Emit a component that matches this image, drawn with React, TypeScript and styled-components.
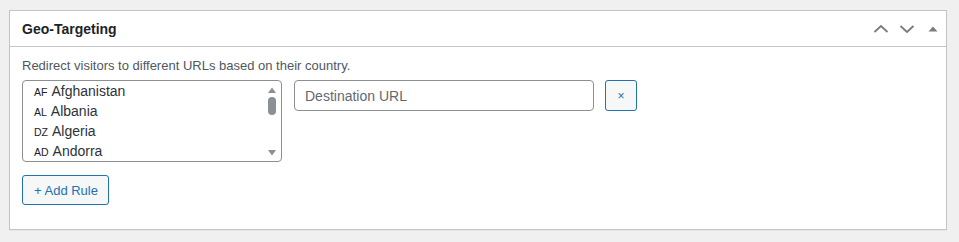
import React from 'react'
import styled, { createGlobalStyle } from 'styled-components'

const countries = [
    { code: 'AF', name: 'Afghanistan' },
    { code: 'AL', name: 'Albania' },
    { code: 'DZ', name: 'Algeria' },
    { code: 'AD', name: 'Andorra' },
]

const GlobalStyle = createGlobalStyle`
    body {
        margin: 0;
        background: #f0f0f1;
        font-family: "Liberation Sans", "Segoe UI", sans-serif;
        color: #1d2327;
    }
`

const App = () => {
    return (
        <>
            <GlobalStyle />
            <Page>
                <Postbox>
                    <Header>
                        <Title>Geo-Targeting</Title>
                        <HeaderActions>
                            <IconButton aria-label="Move up">
                                <svg width="16" height="16" viewBox="0 0 16 16">
                                    <path d="M1.5 11 L8 5 L14.5 11" fill="none" stroke="#787c82" strokeWidth="1.8" />
                                </svg>
                            </IconButton>
                            <IconButton aria-label="Move down">
                                <svg width="16" height="16" viewBox="0 0 16 16">
                                    <path d="M1.5 5 L8 11 L14.5 5" fill="none" stroke="#787c82" strokeWidth="1.8" />
                                </svg>
                            </IconButton>
                            <IconButton aria-label="Toggle panel">
                                <svg width="10" height="10" viewBox="0 0 10 10">
                                    <path d="M0.5 7.5 L5 2.5 L9.5 7.5 Z" fill="#787c82" />
                                </svg>
                            </IconButton>
                        </HeaderActions>
                    </Header>

                    <Inside>
                        <Description>Redirect visitors to different URLs based on their country.</Description>

                        <Rule>
                            <ListBox>
                                <Options>
                                    {countries.map((country) => (
                                        <Option key={country.code}>
                                            <Code>{country.code}</Code>
                                            {country.name}
                                        </Option>
                                    ))}
                                </Options>
                                <Scrollbar>
                                    <svg width="10" height="8" viewBox="0 0 10 8">
                                        <path d="M1 7 L5 1.5 L9 7 Z" fill="#8c8f94" />
                                    </svg>
                                    <Thumb />
                                    <Track />
                                    <svg width="10" height="8" viewBox="0 0 10 8">
                                        <path d="M1 1 L5 6.5 L9 1 Z" fill="#8c8f94" />
                                    </svg>
                                </Scrollbar>
                            </ListBox>

                            <UrlInput type="text" placeholder="Destination URL" />

                            <RemoveButton aria-label="Remove rule">×</RemoveButton>
                        </Rule>

                        <AddButton>+ Add Rule</AddButton>
                    </Inside>
                </Postbox>
            </Page>
        </>
    )
}

const Page = styled.div`
    padding: 10px 12px 11px 9px;
`

const Postbox = styled.div`
    background: #fff;
    border: 1px solid #c3c4c7;
    box-shadow: 0 1px 1px rgba(0,0,0,0.04);
`

const Header = styled.div`
    display: flex;
    align-items: center;
    justify-content: space-between;
    height: 36px;
    box-sizing: border-box;
    border-bottom: 1px solid #c3c4c7;
    padding: 1px 0 0 12px;
`

const Title = styled.h2`
    margin: 0;
    font-size: 14px;
    font-weight: 600;
    color: #1d2327;
`

const HeaderActions = styled.div`
    display: flex;
    align-items: center;
`

const IconButton = styled.button`
    width: 26px;
    height: 26px;
    padding: 0;
    border: 0;
    background: none;
    display: flex;
    align-items: center;
    justify-content: center;
`

const Inside = styled.div`
    padding: 9px 12px 24px 12px;
`

const Description = styled.p`
    margin: 0 0 4px;
    font-size: 13px;
    line-height: 20px;
    color: #50575e;
`

const Rule = styled.div`
    display: flex;
    align-items: flex-start;
    gap: 12px;
`

const ListBox = styled.div`
    display: flex;
    width: 260px;
    height: 82px;
    box-sizing: border-box;
    border: 1px solid #8c8f94;
    border-radius: 4px;
    overflow: hidden;
`

const Options = styled.ul`
    flex: 1;
    list-style: none;
    margin: 0;
    padding: 0 0 0 11px;
`

const Option = styled.li`
    height: 20px;
    line-height: 20px;
    font-size: 14px;
    color: #2c3338;
`

const Code = styled.span`
    font-size: 10.5px;
    font-weight: 400;
    color: #1d2327;
    margin-right: 4px;
`

const Scrollbar = styled.div`
    width: 14px;
    display: flex;
    flex-direction: column;
    align-items: center;
    padding: 5px 2px 4px 0;
`

const Thumb = styled.div`
    width: 8px;
    height: 18px;
    margin-top: 3px;
    border-radius: 4px;
    background: #8c8f94;
`

const Track = styled.div`
    flex: 1;
`

const UrlInput = styled.input`
    width: 300px;
    height: 31px;
    box-sizing: border-box;
    border: 1px solid #8c8f94;
    border-radius: 4px;
    padding: 0 10px;
    font-family: inherit;
    font-size: 14px;
    color: #2c3338;
    &::placeholder { color: #646970; }
`

const RemoveButton = styled.button`
    width: 32px;
    height: 31px;
    margin-left: -1px;
    box-sizing: border-box;
    border: 1px solid #2271b1;
    border-radius: 3px;
    background: #f6f7f7;
    color: #2271b1;
    font-family: inherit;
    font-size: 12px;
    padding: 0;
`

const AddButton = styled.button`
    margin-top: 13px;
    height: 30px;
    padding: 0 10px 0 11px;
    box-sizing: border-box;
    border: 1px solid #2271b1;
    border-radius: 3px;
    background: #f6f7f7;
    color: #2271b1;
    font-family: inherit;
    font-size: 13px;
`

export default App
